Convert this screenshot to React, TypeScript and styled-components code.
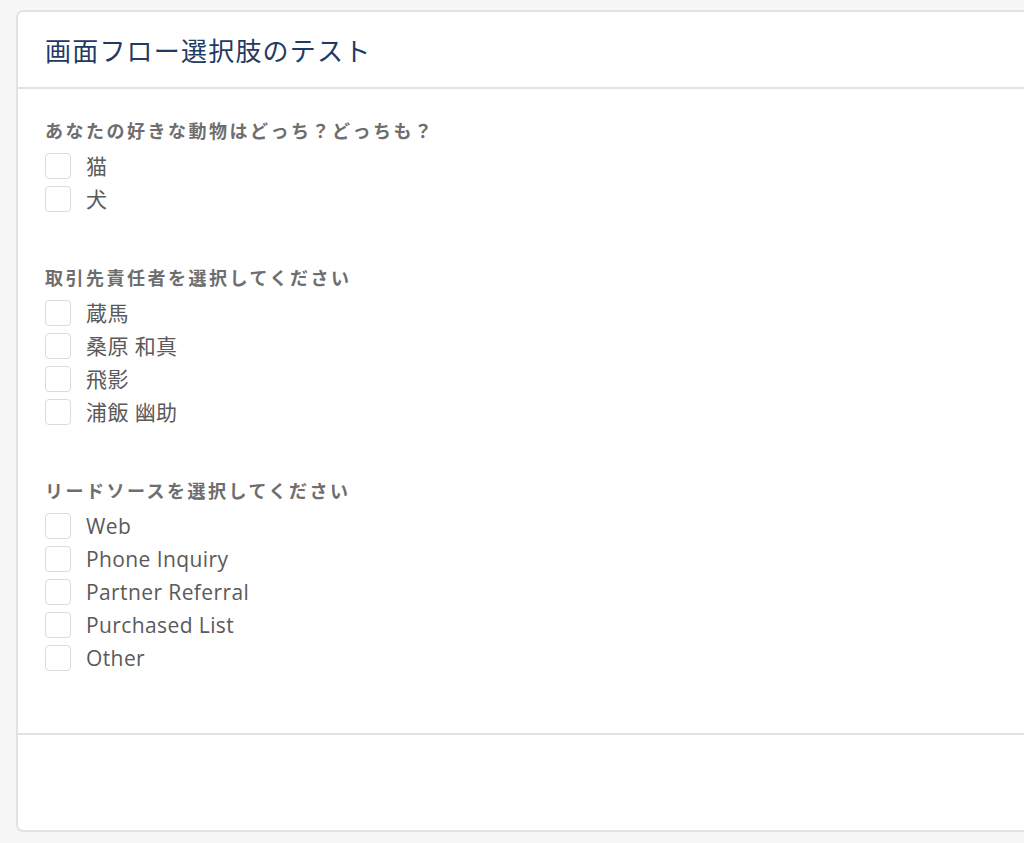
import React from 'react';
import styled, {createGlobalStyle} from 'styled-components';

const GlobalStyle = createGlobalStyle`
    html, body {
        margin: 0;
        padding: 0;
        background: #f7f7f7;
        overflow: hidden;
    }
    body {
        font-family: "Open Sans", "Noto Sans CJK JP", sans-serif;
    }`;

const Page = styled.div`
    padding: 10px 0 0 16px;
    height: 843px;
    box-sizing: border-box;`;

const Card = styled.div`
    width: 1030px;
    background: #fff;
    border: 2px solid #e2e2e2;
    border-radius: 7px;
    display: flex;
    flex-direction: column;`;

const Header = styled.div`
    height: 75px;
    padding: 0 27px;
    display: flex;
    align-items: center;
    border-bottom: 2px solid #e2e2e2;`;

const Title = styled.h1`
    margin: 0;
    font-family: "Noto Sans CJK JP", sans-serif;
    font-weight: 400;
    font-size: 26px;
    color: #1f3a63;
    letter-spacing: 1.2px;`;

const Body = styled.div`
    padding: 29px 27px 62px;
    display: flex;
    flex-direction: column;
    gap: 53px;`;

const Section = styled.div`
    display: flex;
    flex-direction: column;`;

const Legend = styled.div`
    font-family: "Noto Sans CJK JP", sans-serif;
    font-weight: 700;
    font-size: 18px;
    letter-spacing: 2.5px;
    line-height: 24px;
    color: #6e6e6e;
    margin-bottom: 11px;`;

const Options = styled.div`
    display: flex;
    flex-direction: column;
    gap: 7px;`;

const Option = styled.label`
    display: flex;
    align-items: center;
    height: 26px;
    gap: 15px;`;

const Box = styled.span`
    width: 24px;
    height: 24px;
    border: 1px solid #dddbda;
    border-radius: 4px;
    background: #fff;
    flex-shrink: 0;`;

const OptionText = styled.span`
    font-family: "Open Sans", "Noto Sans CJK JP", sans-serif;
    font-size: 21px;
    letter-spacing: 0.4px;
    color: #5a5a5a;
    line-height: 26px;`;

const Footer = styled.div`
    height: 95px;
    border-top: 2px solid #e2e2e2;`;

const groups = [
    {
        legend: 'あなたの好きな動物はどっち？どっちも？',
        options: ['猫', '犬']
    },
    {
        legend: '取引先責任者を選択してください',
        options: ['蔵馬', '桑原 和真', '飛影', '浦飯 幽助']
    },
    {
        legend: 'リードソースを選択してください',
        options: ['Web', 'Phone Inquiry', 'Partner Referral', 'Purchased List', 'Other']
    }
];

const App = () => (
    <Page>
        <GlobalStyle />
        <Card>
            <Header>
                <Title>画面フロー選択肢のテスト</Title>
            </Header>
            <Body>
                {groups.map(g => (
                    <Section key={g.legend}>
                        <Legend>{g.legend}</Legend>
                        <Options>
                            {g.options.map(o => (
                                <Option key={o}>
                                    <Box />
                                    <OptionText>{o}</OptionText>
                                </Option>
                            ))}
                        </Options>
                    </Section>
                ))}
            </Body>
            <Footer />
        </Card>
    </Page>
);

export default App;
